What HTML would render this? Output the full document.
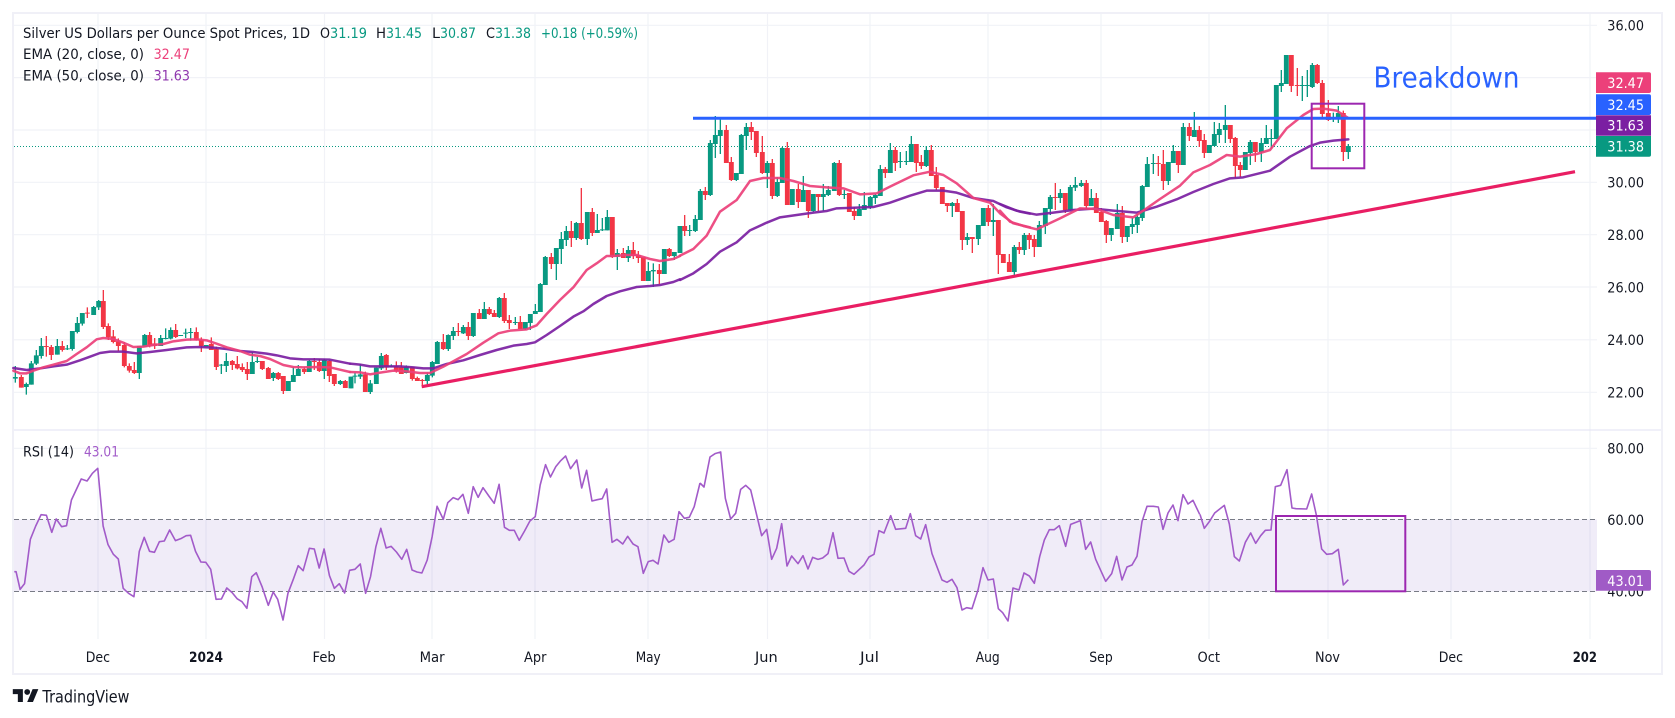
<!DOCTYPE html>
<html><head><meta charset="utf-8"><title>Silver chart</title>
<style>
html,body{margin:0;padding:0;background:#fff;width:1675px;height:718px;overflow:hidden}
svg{display:block}
text{font-family:"DejaVu Sans","Liberation Sans",sans-serif;font-size:14px;fill:#131722}
.g{fill:#089981}.w{fill:#fff}
.gw{stroke:#089981;stroke-width:4;fill:none}.gb{stroke:#089981;stroke-width:14.6;fill:none}
.rw{stroke:#f23645;stroke-width:4;fill:none}.rb{stroke:#f23645;stroke-width:14.6;fill:none}
.e5{stroke:#7b1fa2;stroke-width:7.5;fill:none;stroke-linejoin:round;stroke-linecap:round;stroke-opacity:.92}
.e2{stroke:#ec407a;stroke-width:7.5;fill:none;stroke-linejoin:round;stroke-linecap:round;stroke-opacity:.92}
.r{fill:none;stroke:#a25bc9;stroke-width:1.6;stroke-linejoin:round;vector-effect:non-scaling-stroke}
</style></head><body>
<svg width="1675" height="718" viewBox="0 0 1675 718" xmlns="http://www.w3.org/2000/svg">
<rect width="1675" height="718" fill="#fff"/>
<rect x="13" y="13" width="1649" height="661" fill="#fff" stroke="#f0f0f7" stroke-width="2"/>
<!-- grid -->
<path d="M14 25.3H1597M14 77.6H1597M14 130H1597M14 182.3H1597M14 234.7H1597M14 287H1597M14 339.8H1597M14 392.3H1597M14 448.3H1597" stroke="#f1f2f7" stroke-width="1.2" fill="none"/>
<path d="M98 14V639M206 14V639M324.5 14V639M432 14V639M535 14V639M648 14V639M767.5 14V639M870 14V639M988 14V639M1101 14V639M1209 14V639M1328 14V639M1451 14V639M1590 14V639" stroke="#f1f2f7" stroke-width="1.2" fill="none"/>
<path d="M14 430H1661" stroke="#e8e6f5" stroke-width="1.3" fill="none"/>
<!-- RSI band -->
<rect x="14" y="519.5" width="1583" height="72" fill="#7e57c2" fill-opacity=".115"/>
<path d="M14 519.5H1597M14 591.5H1597" stroke="#787b86" stroke-width="1" stroke-dasharray="5 3" fill="none"/>
<!-- price line -->
<path d="M14 146.5H1597" stroke="#089981" stroke-width="1" stroke-dasharray="1 2" fill="none"/>
<!-- candles A -->
<g transform="translate(0,250) scale(.33333)">
<path class="gw" d="M46 348V398M79 398V434M94 333V404M109 300V345M124 264V326M172 267V314M202 285V300M217 243V302M232 201V250M247 189V227M281 168V195M296 150V180M418 288V387M434 252V291M482 255V288M497 235V268M512 232V268M542 255V258M557 236V264M572 234V272M664 342V372M679 309V366M757 306V372M772 321V339M820 366V393M865 393V423M880 351V396M895 345V378M928 330V366M973 326V387M1021 390V405"/>
<path class="rw" d="M64 375V413M139 258V320M154 285V330M187 273V305M262 172V204M310 120V237M325 220V270M340 240V280M355 265V303M373 276V352M388 340V368M403 336V372M449 246V292M464 264V297M527 222V264M589 232V272M604 262V306M634 262V300M649 290V360M697 330V360M712 318V358M727 340V366M742 336V390M787 333V360M805 351V387M835 366V390M850 378V432M913 351V372M943 324V360M958 327V366M988 330V396M1003 372V408M1036 390V414"/>
<path class="gb" d="M46 381V386M79 402V411M94 340V404M109 316V341M124 288V318M172 288V314M202 295V298M217 243V297M232 219V246M247 189V221M281 171V195M296 153V172M418 288V369M434 255V291M482 264V288M497 264V267M512 240V266M542 255V258M557 248V251M572 246V249M619 285V290M664 344V347M679 333V348M757 336V372M772 333V336M820 369V384M865 393V423M880 375V396M895 357V378M928 333V366M973 330V363M1021 393V402"/>
<path class="rb" d="M64 381V413M139 288V291M154 291V315M187 288V300M262 188V191M310 153V231M325 228V262M340 259V276M355 274V288M373 285V348M388 348V362M403 360V369M449 255V288M464 280V288M527 240V261M589 246V270M604 270V288M634 282V300M649 297V351M697 333V345M712 342V355M727 351V360M742 357V372M787 333V357M805 354V387M835 369V387M850 378V423M913 357V366M943 333V336M958 336V363M988 333V378M1003 372V402M1036 393V414"/>
</g>
<!-- candles B -->
<g transform="translate(350,180) scale(.33333)">
<path class="gw" d="M3 590V625M15 578V610M31 552V597M61 600V642M79 563V612M94 519V570M124 553V562M169 556V580M232 578V612M247 543V592M262 483V552M295 463V513M310 441V480M340 435V462M370 399V471M403 366V417M448 351V414M496 411V435M526 426V450M541 402V450M556 372V402M571 309V396M586 228V315M619 204V300M634 156V252M649 138V198M679 126V180M712 96V195M742 102V159M757 114V153M772 90V151M802 207V270M835 198V246M895 246V303M910 250V321M943 207V282M973 216V240"/>
<path class="rw" d="M46 575V636M109 522V570M139 544V578M154 546V582M187 561V602M202 590V603M217 597V618M280 462V510M325 429V468M355 426V480M388 387V417M418 381V405M433 390V411M463 339V429M478 405V447M511 408V447M604 219V267M664 123V201M694 24V180M727 84V168M787 111V234M820 204V234M850 186V237M865 213V249M880 231V303M928 252V312M958 204V231"/>
<path class="gb" d="M3 590V625M15 587V590M31 583V590M61 610V636M79 563V612M94 528V565M124 558V561M169 560V579M232 585V603M247 546V587M262 486V552M295 465V507M310 453V468M340 441V460M370 399V468M403 387V417M448 354V411M496 426V429M526 426V447M541 402V429M556 393V402M571 312V396M586 231V315M619 204V252M634 177V207M649 153V180M679 129V174M712 96V177M742 150V159M757 148V151M772 111V151M802 219V231M835 210V234M895 273V303M910 270V274M943 207V282M973 216V228"/>
<path class="rb" d="M46 583V636M109 525V563M139 558V573M154 561V582M187 561V597M202 594V603M217 600V603M280 486V507M325 453V456M355 441V468M388 399V417M418 387V402M433 399V411M463 354V423M478 420V429M511 426V447M604 231V252M664 153V174M694 129V177M727 96V159M787 111V231M820 219V234M850 210V228M865 225V234M880 231V303M928 270V282M958 207V228"/>
</g>
<!-- candles C -->
<g transform="translate(680,100) scale(.33333)">
<path class="gw" d="M0 378V459M29 375V408M46 345V396M61 267V360M91 120V288M106 48V174M121 51V162M169 219V243M184 102V222M199 69V150M262 183V264M292 231V291M307 141V249M337 267V315M370 228V306M400 282V336M430 252V333M445 258V288M463 186V273M493 270V297M538 312V348M553 276V330M571 288V327M586 282V312M601 195V288M631 129V219M661 156V204M679 153V195M694 108V186M739 138V201M817 306V351M862 399V435M895 375V435M910 324V378M940 312V408M1003 435V525M1033 399V465"/>
<path class="rw" d="M14 345V408M76 261V300M139 75V189M154 171V243M214 66V120M229 93V171M247 108V222M277 177V297M322 126V315M355 252V324M385 270V354M415 282V333M478 180V288M508 279V336M523 321V360M616 201V234M646 141V213M709 132V216M724 165V207M754 135V228M769 201V270M787 261V312M802 309V336M832 297V336M847 333V450M877 411V459M925 315V378M955 360V522M970 462V489M988 462V516M1018 426V462M1048 399V447"/>
<path class="gb" d="M0 378V459M29 390V393M46 357V393M61 273V360M91 129V285M106 105V132M121 90V108M169 219V240M184 105V222M199 81V108M262 189V219M292 246V288M307 144V249M337 267V315M370 270V306M400 282V333M430 282V291M445 270V285M463 189V273M493 282V285M538 327V348M553 315V330M571 291V321M586 285V294M601 207V288M631 150V219M661 183V186M679 183V186M694 132V186M739 150V198M817 309V318M862 411V420M895 375V417M910 324V378M940 360V366M1003 441V516M1033 405V450"/>
<path class="rb" d="M14 378V393M76 273V285M139 90V189M154 186V240M214 81V96M229 93V159M247 156V219M277 189V288M322 144V315M355 267V306M385 270V333M415 282V291M478 189V285M508 279V336M523 333V348M616 207V219M646 150V189M709 132V189M724 186V198M754 150V228M769 225V264M787 261V312M802 309V318M832 309V336M847 333V420M877 411V417M925 324V366M955 360V465M970 462V489M988 486V516M1018 441V450M1048 405V420"/>
</g>
<!-- candles D -->
<g transform="translate(1000,40) scale(.33333)">
<path class="gw" d="M118 543V621M136 504V582M151 465V525M181 447V489M211 435V513M226 411V453M244 420V441M274 447V498M334 564V603M352 492V567M382 558V606M397 534V582M412 522V579M427 435V543M442 351V441M460 342V402M505 366V435M520 315V369M550 249V375M583 216V291M628 315V339M643 246V318M658 249V309M676 195V309M736 336V390M751 300V375M784 294V366M799 255V312M814 267V325M829 135V297M844 90V156M859 45V132M907 108V183M922 90V171M937 69V144M1000 218V246M1015 198V249M1045 312V357"/>
<path class="rw" d="M103 585V651M166 429V510M196 459V519M259 420V504M289 459V519M304 504V546M319 540V609M367 498V609M475 348V408M490 330V450M535 333V399M568 249V303M598 258V321M613 282V354M691 255V309M706 291V414M721 366V411M766 306V366M874 45V156M892 84V168M952 72V132M967 120V231M985 180V243M1030 212V363"/>
<path class="gb" d="M118 555V621M136 504V558M151 471V507M181 459V474M211 441V510M226 435V443M244 429V438M274 474V498M334 564V585M352 519V567M382 558V591M397 552V561M412 531V555M427 438V534M442 372V441M460 369V372M505 366V423M520 333V369M550 261V375M583 270V291M628 315V339M643 282V318M658 267V285M676 255V270M736 336V390M751 306V339M784 309V336M799 294V312M814 294V297M829 135V297M844 129V138M859 45V132M907 135V138M922 135V138M937 75V141M1000 232V236M1015 219V235M1045 318V336"/>
<path class="rb" d="M103 597V621M166 471V474M196 459V510M259 429V498M289 474V519M304 516V546M319 543V585M367 519V591M475 369V372M490 372V423M535 333V375M568 261V288M598 270V303M613 300V339M691 255V297M706 294V378M721 375V390M766 306V336M874 45V138M892 135V138M952 75V129M967 129V222M985 219V240M1030 219V336"/>
</g>
<!-- EMAs -->
<g transform="translate(0,250) scale(.33333)">
<polyline class="e5" points="40,354 80,360 120,355 160,349 200,344 240,331 270,320 300,309 330,305 370,305 410,310 450,306 500,300 560,292 600,291 640,293 680,297 720,303 760,306 800,311 830,316 870,325 910,328 950,328 990,329 1020,335 1050,341"/>
<polyline class="e2" points="40,362 60,370 80,370 100,362 130,352 160,344 200,333 230,312 260,292 290,268 310,264 340,267 370,278 400,291 430,290 460,285 490,282 520,274 560,269 590,268 620,271 650,281 680,292 720,303 750,314 780,318 810,327 850,345 880,351 910,352 950,351 990,352 1020,359 1050,366"/>
</g>
<g transform="translate(350,180) scale(.33333)">
<polyline class="e5" points="0,551 30,554 60,559 100,559 150,559 190,562 220,565 250,565 290,552 340,541 390,525 440,510 490,497 530,492 555,487 590,465 630,438 670,410 700,394 730,372 770,348 810,334 860,321 900,318 930,315 970,306 990,298"/>
<polyline class="e2" points="0,576 30,577 60,583 90,578 130,572 170,574 210,579 240,579 280,560 350,522 400,488 445,460 480,452 530,448 560,436 590,402 630,360 670,322 710,270 740,250 770,228 790,228 830,225 860,225 900,237 930,243 970,237 990,228"/>
</g>
<g transform="translate(680,100) scale(.33333)">
<polyline class="e5" points="0,540 40,520 80,492 120,455 170,427 210,391 260,368 300,352 350,345 400,338 440,333 470,325 530,323 580,321 630,308 690,287 740,272 790,272 830,278 880,294 940,303 980,322 1020,335 1050,341"/>
<polyline class="e2" points="0,467 40,447 80,407 120,335 170,300 210,243 250,234 300,234 340,243 390,258 440,262 490,265 540,283 590,280 640,255 700,226 750,215 790,225 830,250 880,294 930,308 960,340 1000,370 1050,382"/>
</g>
<g transform="translate(1000,40) scale(.33333)">
<polyline class="e5" points="0,492 50,512 110,524 160,518 220,510 280,506 340,512 410,518 470,500 530,478 580,456 640,432 690,415 730,412 810,392 870,350 930,318 960,308 1000,302 1045,298"/>
<polyline class="e2" points="0,512 30,545 70,558 110,568 180,535 240,505 290,507 340,525 400,532 440,505 480,477 540,437 580,397 630,375 680,345 720,350 770,342 810,330 860,265 910,225 940,207 970,206 1010,212 1045,234"/>
</g>
<!-- drawings -->
<path d="M693 118.3H1597" stroke="#2962ff" stroke-width="3" fill="none"/>
<path d="M421.7 386.7L1575 171.7" stroke="#e91e63" stroke-width="3.2" fill="none"/>
<rect x="1311.7" y="103.7" width="52.6" height="64.6" fill="none" stroke="#9c27b0" stroke-width="2"/>
<!-- RSI -->
<polyline class="r" transform="translate(0,420) scale(.44643,.33333)" points="32,455 36,455 45,508 55,491 68,358 80,318 92,284 104,286 116,337 126,297 138,320 149,317 160,240 182,177 195,183 207,160 219,145 231,318 242,374 254,403 265,417 276,505 288,520 300,530 312,394 323,352 335,394 346,397 357,365 368,363 380,330 393,362 405,356 417,347 427,346 438,394 450,426 461,427 472,448 484,538 496,537 508,504 520,518 531,536 542,545 553,565 564,470 574,458 587,500 601,556 612,516 622,538 634,600 645,520 657,478 668,437 679,452 693,385 704,387 715,444 726,387 738,467 749,505 760,491 772,519 783,451 795,448 807,432 819,520 830,470 842,380 853,325 865,384 876,379 888,396 900,418 911,388 923,450 934,456 945,459 957,420 968,350 979,259 993,298 1003,248 1015,233 1026,239 1037,223 1049,280 1060,200 1071,232 1082,203 1095,228 1107,250 1118,193 1130,322 1141,331 1152,331 1163,361 1175,333 1187,303 1199,290 1210,195 1222,134 1233,171 1245,140 1256,122 1267,108 1278,146 1292,120 1303,204 1314,151 1326,243 1338,239 1349,236 1359,207 1371,367 1382,358 1395,372 1406,349 1418,372 1429,380 1441,460 1452,425 1463,421 1474,432 1487,345 1498,367 1510,358 1521,275 1533,295 1544,292 1555,260 1568,189"/>
<polyline class="r" transform="translate(700,420) scale(.33333)" points="0,189 12,201 30,111 45,101 62,96 76,235 92,297 107,280 122,208 137,196 152,210 185,347 200,328 215,418 230,385 245,311 261,438 275,408 294,431 309,407 324,447 338,412 354,418 368,414 384,401 399,338 414,415 432,414 447,454 462,463 492,435 507,411 522,403 537,332 552,339 572,287 587,328 617,325 631,281 647,347 662,357 677,314 696,401 726,480 741,487 756,478 771,503 786,570 800,563 816,566 834,510 849,443 864,480 880,477 895,566 908,578 924,603 939,504 957,510 972,459 988,468 1003,490 1019,410 1033,360 1048,329 1063,329 1078,317 1097,379 1112,313 1141,302 1157,388 1172,366 1187,418 1217,484 1235,461 1250,409 1266,480 1281,441 1296,435 1311,409 1326,305 1341,259 1360,259 1375,261 1389,328 1404,279 1419,255 1434,302 1449,224 1464,252 1479,241 1499,283"/>
<polyline class="r" transform="translate(1200,420) scale(.33333)" points="0,283 13,325 28,305 44,279 73,256 88,312 103,410 118,423 136,367 152,339 167,370 182,347 196,331 213,330 226,200 242,196 261,149 276,264 288,266 320,267 335,222 349,285 365,387 380,403 397,401 415,388 430,495 445,479"/>
<rect x="1276" y="516" width="129.3" height="75.3" fill="none" stroke="#9c27b0" stroke-width="2"/>
<!-- Breakdown -->
<text x="1373.5" y="87.3" textLength="146" lengthAdjust="spacingAndGlyphs" style="font-size:28.5px;fill:#2962ff">Breakdown</text>
<!-- Legend -->
<text x="23" y="37.8" textLength="287" lengthAdjust="spacingAndGlyphs">Silver US Dollars per Ounce Spot Prices, 1D</text>
<text x="320" y="37.8" textLength="10" lengthAdjust="spacingAndGlyphs">O</text><text class="g" x="330" y="37.8" textLength="37" lengthAdjust="spacingAndGlyphs">31.19</text>
<text x="376" y="37.8" textLength="10" lengthAdjust="spacingAndGlyphs">H</text><text class="g" x="386" y="37.8" textLength="36" lengthAdjust="spacingAndGlyphs">31.45</text>
<text x="432" y="37.8" textLength="8" lengthAdjust="spacingAndGlyphs">L</text><text class="g" x="440" y="37.8" textLength="36" lengthAdjust="spacingAndGlyphs">30.87</text>
<text x="486" y="37.8" textLength="9" lengthAdjust="spacingAndGlyphs">C</text><text class="g" x="495" y="37.8" textLength="36" lengthAdjust="spacingAndGlyphs">31.38</text>
<text class="g" x="541" y="37.8" textLength="97" lengthAdjust="spacingAndGlyphs">+0.18 (+0.59%)</text>
<text x="23" y="59" textLength="121" lengthAdjust="spacingAndGlyphs">EMA (20, close, 0)</text>
<text x="153.6" y="59" textLength="36.4" lengthAdjust="spacingAndGlyphs" style="fill:#ec407a">32.47</text>
<text x="23" y="80.3" textLength="121" lengthAdjust="spacingAndGlyphs">EMA (50, close, 0)</text>
<text x="153.6" y="80.3" textLength="36.4" lengthAdjust="spacingAndGlyphs" style="fill:#8e35ad">31.63</text>
<text x="23" y="456.3" textLength="51" lengthAdjust="spacingAndGlyphs">RSI (14)</text>
<text x="84" y="456.3" textLength="35" lengthAdjust="spacingAndGlyphs" style="fill:#a25bc9">43.01</text>
<!-- Price axis -->
<text x="1607.3" y="30.7" textLength="36.7" lengthAdjust="spacingAndGlyphs">36.00</text>
<text x="1607.3" y="187.7" textLength="36.7" lengthAdjust="spacingAndGlyphs">30.00</text>
<text x="1607.3" y="240" textLength="36.7" lengthAdjust="spacingAndGlyphs">28.00</text>
<text x="1607.3" y="292.3" textLength="36.7" lengthAdjust="spacingAndGlyphs">26.00</text>
<text x="1607.3" y="344.8" textLength="36.7" lengthAdjust="spacingAndGlyphs">24.00</text>
<text x="1607.3" y="397.3" textLength="36.7" lengthAdjust="spacingAndGlyphs">22.00</text>
<text x="1607.3" y="453.3" textLength="36.7" lengthAdjust="spacingAndGlyphs">80.00</text>
<text x="1607.3" y="524.8" textLength="36.7" lengthAdjust="spacingAndGlyphs">60.00</text>
<text x="1607.3" y="596.3" textLength="36.7" lengthAdjust="spacingAndGlyphs">40.00</text>
<!-- tags -->
<path d="M1596 72.3H1649a2 2 0 0 1 2 2V91a2 2 0 0 1-2 2H1596z" fill="#ec407a"/>
<path d="M1596 94.3H1649a2 2 0 0 1 2 2V113a2 2 0 0 1-2 2H1596z" fill="#2962ff"/>
<path d="M1596 115.3H1651V135.7H1596z" fill="#7b1fa2"/>
<path d="M1596 136H1651V154.7a2 2 0 0 1-2 2H1596z" fill="#089981"/>
<path d="M1596 570H1649a2 2 0 0 1 2 2V588.7a2 2 0 0 1-2 2H1596z" fill="#a05bc6"/>
<text class="w" x="1607.3" y="88" textLength="36.7" lengthAdjust="spacingAndGlyphs">32.47</text>
<text class="w" x="1607.3" y="110" textLength="36.7" lengthAdjust="spacingAndGlyphs">32.45</text>
<text class="w" x="1607.3" y="130.5" textLength="36.7" lengthAdjust="spacingAndGlyphs">31.63</text>
<text class="w" x="1607.3" y="151.5" textLength="36.7" lengthAdjust="spacingAndGlyphs">31.38</text>
<text class="w" x="1607.3" y="586" textLength="36.7" lengthAdjust="spacingAndGlyphs">43.01</text>
<!-- time axis -->
<text x="85.7" y="662" textLength="24.3" lengthAdjust="spacingAndGlyphs">Dec</text>
<text x="189" y="662" textLength="34" lengthAdjust="spacingAndGlyphs" style="font-weight:bold">2024</text>
<text x="312.5" y="662" textLength="23.2" lengthAdjust="spacingAndGlyphs">Feb</text>
<text x="419.6" y="662" textLength="25" lengthAdjust="spacingAndGlyphs">Mar</text>
<text x="524" y="662" textLength="22.4" lengthAdjust="spacingAndGlyphs">Apr</text>
<text x="635.7" y="662" textLength="25" lengthAdjust="spacingAndGlyphs">May</text>
<text x="755" y="662" textLength="22.7" lengthAdjust="spacingAndGlyphs">Jun</text>
<text x="860" y="662" textLength="19" lengthAdjust="spacingAndGlyphs">Jul</text>
<text x="975.7" y="662" textLength="24" lengthAdjust="spacingAndGlyphs">Aug</text>
<text x="1089.3" y="662" textLength="23.4" lengthAdjust="spacingAndGlyphs">Sep</text>
<text x="1197.5" y="662" textLength="22.5" lengthAdjust="spacingAndGlyphs">Oct</text>
<text x="1315" y="662" textLength="25" lengthAdjust="spacingAndGlyphs">Nov</text>
<text x="1438.7" y="662" textLength="24.3" lengthAdjust="spacingAndGlyphs">Dec</text>
<text x="1572.7" y="662" textLength="24.3" lengthAdjust="spacingAndGlyphs" style="font-weight:bold">202</text>
<!-- logo -->
<g transform="translate(12.8,686.2) scale(.72)" fill="#131722">
<path d="M14 22H7V11H0V4h14v18zM28 22h-8l7.5-18h8L28 22z"/><circle cx="20" cy="8" r="4"/>
</g>
<text x="42.4" y="702.5" textLength="87" lengthAdjust="spacingAndGlyphs" style="font-size:17px">TradingView</text>
</svg>
</body></html>
